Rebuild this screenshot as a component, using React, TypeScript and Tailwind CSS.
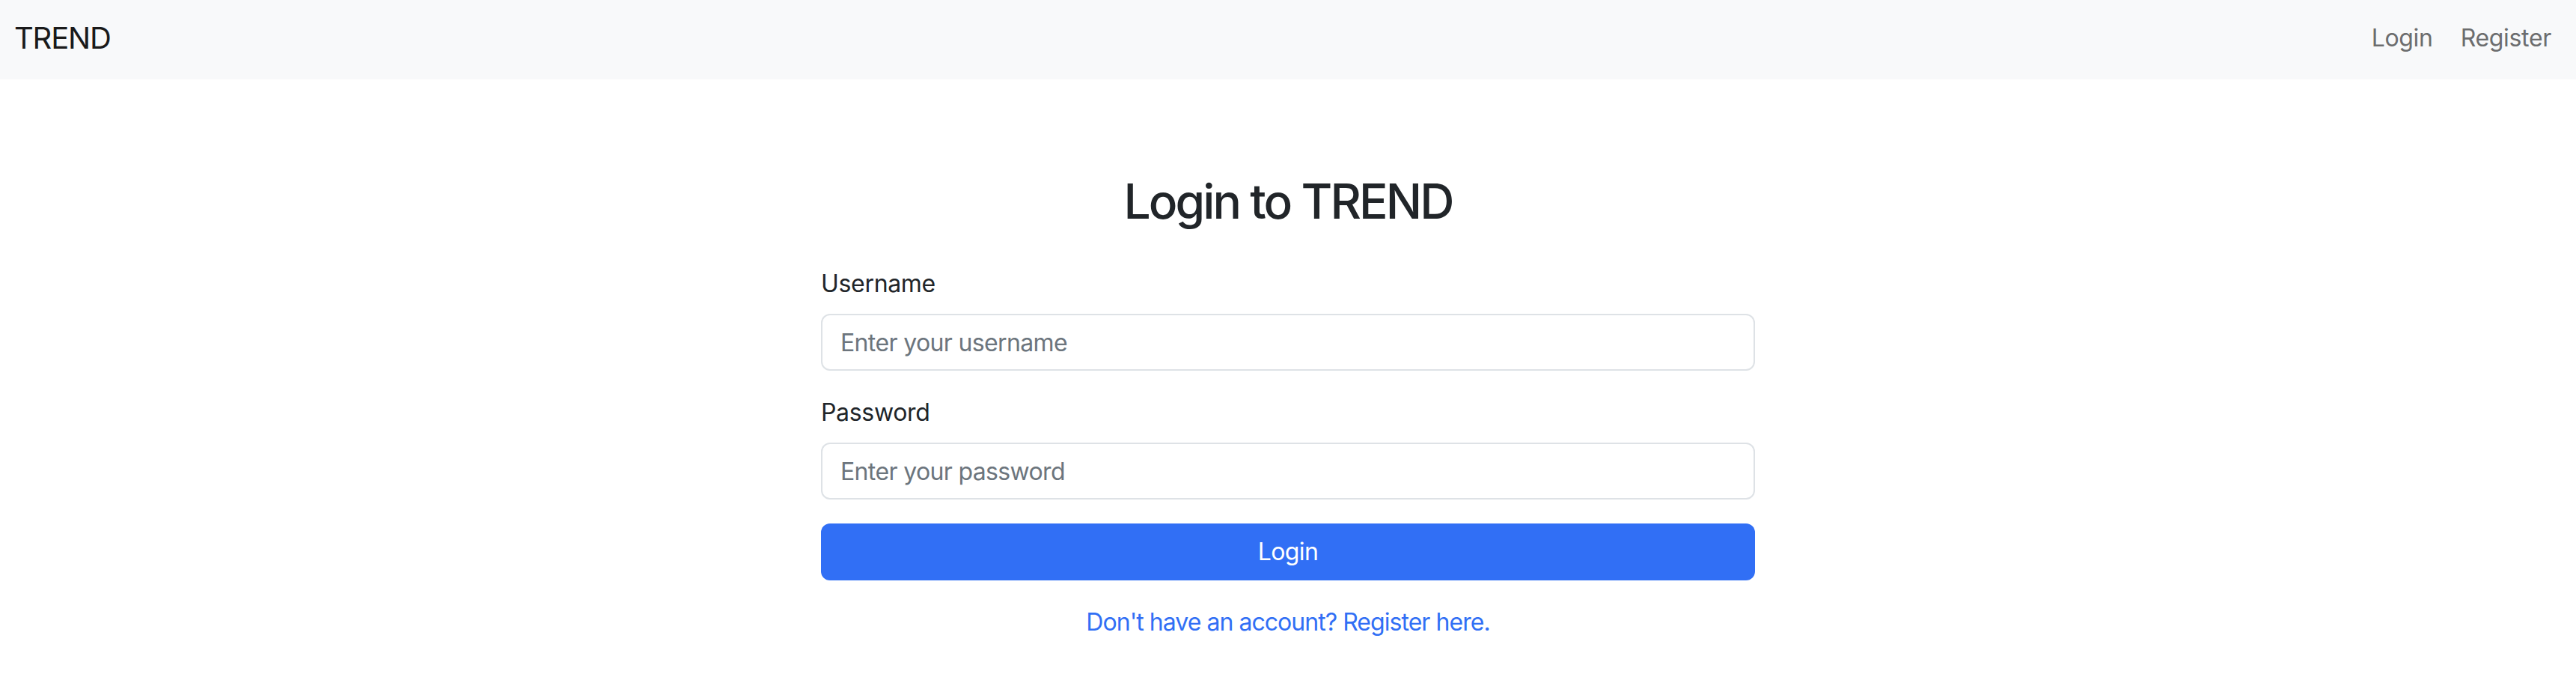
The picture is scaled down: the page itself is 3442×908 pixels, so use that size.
import React from "react";

export default function App() {
  return (
    <div className="min-h-[908px] bg-white font-['Inter',_'Noto_Sans',_sans-serif] tracking-[-0.02em]">
      <nav className="h-[106px] bg-[#f8f9fa] flex items-start justify-between pl-[19px] pr-[33px]">
        <div className="mt-[21px] text-[40px] leading-[60px] tracking-[-0.03em] text-[#1a1a1a]">TREND</div>
        <div className="mt-[27px] flex gap-[37px] text-[32px] leading-[48px] text-[#6c6d6e]">
          <a href="#">Login</a>
          <a href="#">Register</a>
        </div>
      </nav>
      <main className="pt-[124px]">
        <div className="w-[1248px] mx-auto">
          <h2 className="text-center text-[64px] leading-[77px] font-medium tracking-[-0.045em] text-[#212529] mb-[48px]">
            Login to TREND
          </h2>
          <div className="mb-[32px]">
            <label className="block text-[32px] leading-[48px] text-[#212529] mb-[16px]">Username</label>
            <input
              type="text"
              placeholder="Enter your username"
              className="block w-full h-[76px] px-[24px] border-2 border-[#dee2e6] rounded-[12px] text-[32px] leading-[48px] tracking-[-0.02em] text-[#212529] placeholder:text-[#6c757d] outline-none"
            />
          </div>
          <div className="mb-[32px]">
            <label className="block text-[32px] leading-[48px] text-[#212529] mb-[16px]">Password</label>
            <input
              type="password"
              placeholder="Enter your password"
              className="block w-full h-[76px] px-[24px] border-2 border-[#dee2e6] rounded-[12px] text-[32px] leading-[48px] tracking-[-0.02em] text-[#212529] placeholder:text-[#6c757d] outline-none"
            />
          </div>
          <button className="w-full h-[76px] rounded-[12px] bg-[#316ff5] text-white text-[32px] leading-[48px] tracking-[-0.02em]">
            Login
          </button>
          <p className="mt-[32px] text-center text-[32px] leading-[48px] tracking-[-0.03em]">
            <a href="#" className="text-[#316ff5]">Don't have an account? Register here.</a>
          </p>
        </div>
      </main>
    </div>
  );
}
